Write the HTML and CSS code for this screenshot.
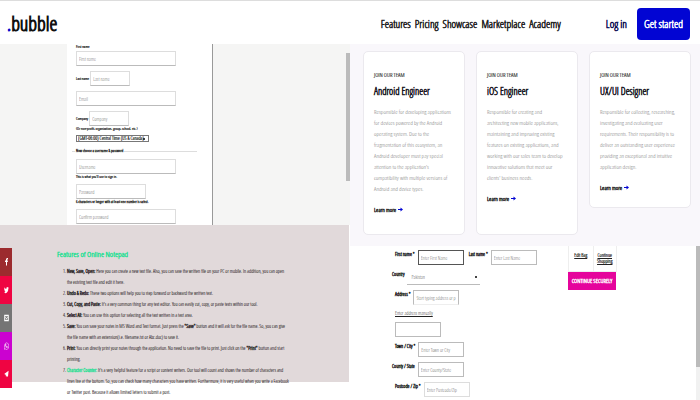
FILE: index.html
```html
<!DOCTYPE html>
<html lang="en">
<head>
<meta charset="utf-8">
<title>Bubble</title>
<link rel="stylesheet" href="styles.css">
</head>
<body>
<header class="top">
  <a class="logo" href="#"><span class="logo-dot">.</span>bubble</a>
  <nav class="nav">
    <a href="#">Features</a><a href="#">Pricing</a><a href="#">Showcase</a><a href="#">Marketplace</a><a href="#">Academy</a>
  </nav>
  <a class="login" href="#">Log in</a>
  <button class="start" type="button">Get started</button>
</header>
<main class="board">
  <div class="col">
    <section class="signup">
      <form class="paper">
        <label class="cap" for="su-first">First name</label>
        <input class="field" id="su-first" placeholder="First name">
        <div class="line"><label for="su-last">Last name</label><input class="field short" id="su-last" placeholder="Last name"></div>
        <input class="field" aria-label="Email" placeholder="Email">
        <div class="line"><label for="su-company">Company</label><input class="field short" id="su-company" placeholder="Company"></div>
        <p class="note">(Or non-profit, organization, group, school, etc.)</p>
        <select class="zone" aria-label="Time zone"><option>(GMT-06:00) Central Time (US &amp; Canada)</option></select>
        <div class="legend">Now choose a username &amp; password</div>
        <input class="field" aria-label="Username" placeholder="Username">
        <p class="note hint">This is what you'll use to sign in.</p>
        <input class="field medium" type="text" aria-label="Password" placeholder="Password">
        <p class="note hint dark-note">6 characters or longer with at least one number is safest.</p>
        <input class="field" type="text" aria-label="Confirm password" placeholder="Confirm password">
      </form>
      <div class="thumb"></div>
    </section>
    <section class="notepad">
      <div class="social">
        <a class="red" href="#" aria-label="Facebook"><svg viewBox="2 3 6 16" preserveAspectRatio="none"><path d="M4 18v-7H2V8h2V6c0-2 1-3 4-3v3C6.500 6 6 6 6 7v1h2l-.5 3H6v7z"/></svg></a>
        <a class="pink" href="#" aria-label="Twitter"><svg viewBox="0 0 24 24" preserveAspectRatio="none"><path d="M23 5c-1 .5-2 .7-2.600.8 1-.6 1.600-1.400 2-2.500-1 .6-2 .9-3 1.100a4.700 4.700 0 0 0-8 4.300C7.500 8.500 4 6.600 1.700 3.800c-1.300 2.200-.6 4.900 1.500 6.300-.8 0-1.500-.2-2.200-.6 0 2.300 1.600 4.200 3.800 4.700-.7.200-1.400.2-2.100.1.600 1.900 2.300 3.200 4.400 3.300A9.500 9.500 0 0 1 0 19.500C10 25 21 19 20.800 7.500 21.700 6.800 22.400 6 23 5z"/></svg></a>
        <a class="gray" href="#" aria-label="Email"><svg viewBox="0 0 24 24" preserveAspectRatio="none"><path fill-rule="evenodd" d="M1 2h22v20H1zM5 7v1l7 5 7-5V7zM5 11v6h14v-6l-7 5z"/></svg></a>
        <a class="violet" href="#" aria-label="WhatsApp"><svg viewBox="0 0 24 24" preserveAspectRatio="none"><path fill="none" stroke="#fff" stroke-width="2" d="M2 22l1.500-5.500A10 10 0 1 1 7.500 21z"/><path d="M8 6l2 .2 1 3-1.200 1.400c1 1.800 2 2.700 3.700 3.600l1.500-1.500 3 1.300c0 2-1.500 3-3 3-5 0-9-5-9-8 0-1.500 1-3 2-3z"/></svg></a>
        <a class="pink" href="#" aria-label="Telegram"><svg viewBox="0 0 24 24" preserveAspectRatio="none"><path d="M1 12L22 2l-3 19-6-4-3 5-2-8z"/></svg></a>
      </div>
      <article class="features">
        <h2>Features of Online Notepad</h2>
        <ol>
          <li><b>New, Save, Open:</b> Here you can create a new text file. Also, you can save the written file on your PC or mobile. In addition, you can open<br>the existing text file and edit it here.</li>
          <li><b>Undo &amp; Redo:</b> These two options will help you to step forward or backward the written text.</li>
          <li><b>Cut, Copy, and Paste:</b> It's a very common thing for any text editor. You can easily cut, copy, or paste texts within our tool.</li>
          <li><b>Select All:</b> You can use this option for selecting all the text written in a text area.</li>
          <li><b>Save:</b> You can save your notes in MS Word and Text format. Just press the <b>"Save"</b> button and it will ask for the file name. So, you can give<br>the file name with an extension(i.e. filename.txt or Abc.doc) to save it.</li>
          <li><b>Print:</b> You can directly print your notes through the application. No need to save the file to print. Just click on the <b>"Print"</b> button and start<br>printing.</li>
          <li><a href="#">Character Counter:</a> It's a very helpful feature for a script or content writers. Our tool will count and shows the number of characters and<br>lines live at the bottom. So, you can check how many characters you have written. Furthermore, it is very useful when you write a Facebook<br>or Twitter post. Because it allows limited letters to submit a post.</li>
        </ol>
      </article>
    </section>
  </div>
  <div class="col">
    <section class="jobs">
      <article class="card">
        <p class="team">JOIN OUR TEAM</p>
        <h3>Android Engineer</h3>
        <p class="desc">Responsible for developing applications<br>for devices powered by the Android<br>operating system. Due to the<br>fragmentation of this ecosystem, an<br>Android developer must pay special<br>attention to the application's<br>compatibility with multiple versions of<br>Android and device types.</p>
        <a class="more" href="#">Learn more <svg viewBox="0 0 10 8"><path d="M0 3h5V0l5 4-5 4V5H0z"/></svg></a>
      </article>
      <article class="card">
        <p class="team">JOIN OUR TEAM</p>
        <h3>iOS Engineer</h3>
        <p class="desc">Responsible for creating and<br>architecting new mobile applications,<br>maintaining and improving existing<br>features on existing applications, and<br>working with our sales team to develop<br>innovative solutions that meet our<br>clients' business needs.</p>
        <a class="more" href="#">Learn more <svg viewBox="0 0 10 8"><path d="M0 3h5V0l5 4-5 4V5H0z"/></svg></a>
      </article>
      <article class="card compact">
        <p class="team">JOIN OUR TEAM</p>
        <h3>UX/UI Designer</h3>
        <p class="desc">Responsible for collecting, researching,<br>investigating and evaluating user<br>requirements. Their responsibility is to<br>deliver an outstanding user experience<br>providing an exceptional and intuitive<br>application design.</p>
        <a class="more" href="#">Learn more <svg viewBox="0 0 10 8"><path d="M0 3h5V0l5 4-5 4V5H0z"/></svg></a>
      </article>
    </section>
    <section class="checkout">
      <form class="address">
        <div class="row"><label for="c-first">First name *</label><input class="box dark" id="c-first" placeholder="Enter First Name"><label for="c-last">Last name *</label><input class="box" id="c-last" placeholder="Enter Last Name"></div>
        <div class="row out"><label for="c-country">Country</label><select class="country" id="c-country"><option>Pakistan</option></select></div>
        <div class="row"><label for="c-addr">Address *</label><input class="box open" id="c-addr" placeholder="Start typing address or p"></div>
        <a class="manual" href="#">Enter address manually</a>
        <div class="row"><input class="box" aria-label="Address line"></div>
        <div class="row"><label for="c-town">Town / City *</label><input class="box" id="c-town" placeholder="Enter Town or City"></div>
        <div class="row out"><label for="c-county">County / State</label><input class="box" id="c-county" placeholder="Enter County/State"></div>
        <div class="row"><label for="c-zip">Postcode / Zip *</label><input class="box pale" id="c-zip" placeholder="Enter Postcode/Zip"></div>
      </form>
      <div class="bag">
        <div class="bag-links"><a href="#">Edit Bag</a><a href="#">Continue<br>Shopping</a></div>
        <button type="button">CONTINUE SECURELY</button>
      </div>
      <div class="track"><div class="bar"></div></div>
    </section>
  </div>
</main>
</body>
</html>
```
FILE: styles.css
```css
* { box-sizing: border-box; }
body, p, h2, h3, ol { margin: 0; }
body {
  font-family: "Open Sans Condensed Light", "Open Sans Condensed", "Roboto Condensed", "Liberation Sans", sans-serif;
  font-size: 6px;
  color: #222;
  background: #fff;
  overflow: hidden;
}
a { color: inherit; text-decoration: none; }
h2, h3 { font-weight: normal; }
input, select, button { font: inherit; border-radius: 0; margin: 0; min-width: 0; }

.top {
  display: flex;
  align-items: center;
  height: 44px;
  padding: 2px 10px 0 7px;
  border-top: 1px solid #ddd;
  font-size: 11px;
  white-space: nowrap;
}
.logo { font-size: 20px; line-height: 28px; color: #111; -webkit-text-stroke: 1px #111; }
.logo-dot { color: #00c; -webkit-text-stroke: 1px #00c; }
.nav { display: flex; gap: 4px; margin-left: auto; color: #222; -webkit-text-stroke: 0.5px #222; }
.login { margin-left: 45px; color: #0a0a50; -webkit-text-stroke: 0.5px #0a0a50; }
.start {
  margin-left: 10px;
  width: 53px;
  height: 32px;
  padding: 0;
  border: 0;
  border-radius: 4px;
  background: #0205d3;
  color: #fff;
  -webkit-text-stroke: 0.5px #fff;
}

.board { display: grid; grid-template-columns: 1fr 1fr; }
.col { min-width: 0; }

.signup { display: flex; height: 181px; overflow: hidden; background: #f5f5f4; }
.paper {
  display: flex;
  flex-direction: column;
  align-items: flex-start;
  width: 146px;
  margin-left: 67px;
  padding-left: 9px;
  border-right: 1px solid #999;
  background: #fff;
  font-size: 4px;
  line-height: 6px;
  color: #222;
  -webkit-text-stroke: 0.2px #222;
  white-space: nowrap;
}
.cap { margin-bottom: 1px; }
.field {
  flex: none;
  width: 100px;
  height: 15px;
  margin-bottom: 5px;
  padding: 0 2px;
  border: 1px solid #ddd;
  border-bottom-color: #bbb;
  background: #fff;
  font-size: 5px;
  -webkit-text-stroke: 0;
}
.short { width: 40px; }
.medium { width: 70px; }
.line { display: flex; align-items: center; gap: 1px; }
.line label { margin-bottom: 5px; }
.field::placeholder, .box::placeholder { color: #666; opacity: 1; }
.note { margin-top: -5px; margin-bottom: 3px; }
.zone, .country {
  appearance: none;
  background: linear-gradient(#444, #444) right 3px center / 2px 2px no-repeat #fff;
}
.zone { width: 73px; height: 7px; padding: 0 1px; border: 1px solid #777; font-size: 5px; line-height: 5px; color: #222; }
.legend { display: flex; align-items: center; width: 125px; margin: 6px 0 5px -4px; gap: 1px; -webkit-text-stroke: 0.3px #222; }
.legend::before, .legend::after { content: ""; width: 3px; height: 1px; background: #ddd; }
.legend::after { flex: 1; }
.hint { margin-bottom: 4px; }
.dark-note { -webkit-text-stroke: 0.3px #222; }
.thumb { width: 4px; height: 128px; margin: 9px 0 0 auto; background: #bbb; }

.notepad {
  display: flex;
  align-items: flex-start;
  height: 175px;
  margin-right: 1px;
  background: linear-gradient(#e1d9da 157px, #fff 157px);
}
.social { flex: none; width: 12px; margin-top: 23px; }
.social a { display: flex; align-items: center; justify-content: center; height: 28px; }
.social svg { width: 5px; height: 8px; fill: #fff; }
.social .red svg { width: 3px; }
.red { background: #9c2b2e; }
.pink { background: #ef0442; }
.gray { background: #757575; }
.violet { background: #cb02d0; }
.features { margin-left: 45px; padding-top: 22px; white-space: nowrap; }
.features h2 { font-size: 8px; line-height: 14px; color: #1fdf92; -webkit-text-stroke: 0.4px #1fdf92; }
.features ol { margin-top: 5px; padding-left: 10px; font-size: 5px; line-height: 11px; color: #332c2e; -webkit-text-stroke: 0.1px #332c2e; }
.features b { color: #111; }
.features li a { color: #1fdf92; -webkit-text-stroke: 0.4px #1fdf92; }

.jobs {
  display: grid;
  grid-template-columns: 1fr 1fr 1fr;
  gap: 11px;
  height: 202px;
  padding: 7px 9px 12px 13px;
  background: #f9f7fb;
}
.card {
  min-width: 0;
  padding: 17px 0 18px 10px;
  border: 1px solid #ebe9ee;
  border-radius: 5px;
  background: #fff;
  white-space: nowrap;
}
.compact { align-self: start; padding-bottom: 13px; }
.team { font-size: 6px; line-height: 12px; color: #444; -webkit-text-stroke: 0.2px #444; }
.card h3 { margin-top: 3px; font-size: 10px; line-height: 14px; color: #191724; -webkit-text-stroke: 0.5px #191724; }
.desc { margin-top: 9px; font-size: 6px; line-height: 11px; color: #777; }
.more { display: block; margin-top: 9px; font-size: 6px; line-height: 12px; color: #111; -webkit-text-stroke: 0.4px #111; }
.more svg { width: 5px; height: 5px; margin-left: 1px; fill: #0205d3; }

.checkout { display: flex; align-items: flex-start; height: 154px; font-size: 5px; white-space: nowrap; }
.address { display: flex; flex-direction: column; gap: 5px; padding: 4px 0 0 45px; width: 218px; }
.row { display: flex; align-items: flex-start; gap: 3px; }
.row label { padding-top: 1px; line-height: 6px; color: #111; -webkit-text-stroke: 0.4px #111; }
.row .box + label { margin-left: 2px; }
.out { margin-left: -3px; }
.box { width: 46px; height: 15px; padding: 0 2px; border: 1px solid #bbb; background: #fff; }
.dark { border-color: #555; }
.pale { border-color: #ddd; }
.open { border-bottom-color: #eee; }
.country { width: 73px; height: 15px; padding: 0 4px; border: 0; border-bottom: 1px solid #bbb; color: #444; }
.manual { line-height: 7px; color: #222; }
.address .manual { text-decoration: underline; }
.bag { width: 49px; }
.bag-links { display: grid; grid-template-columns: 1fr 1fr; height: 26px; border: 1px solid #eee; border-top: 0; text-align: center; line-height: 6px; }
.bag-links a { padding-top: 6px; text-decoration: underline; -webkit-text-stroke: 0.2px #222; }
.bag-links a + a { border-left: 1px solid #eee; }
.bag button { display: block; width: 48px; height: 18px; padding: 0; border: 0; background: #e5059c; color: #fff; font-size: 6px; -webkit-text-stroke: 0.4px #fff; }
.track { width: 4px; height: 154px; margin-left: auto; background: #f1f1f1; }
.bar { height: 121px; background: #bbb; }
```
